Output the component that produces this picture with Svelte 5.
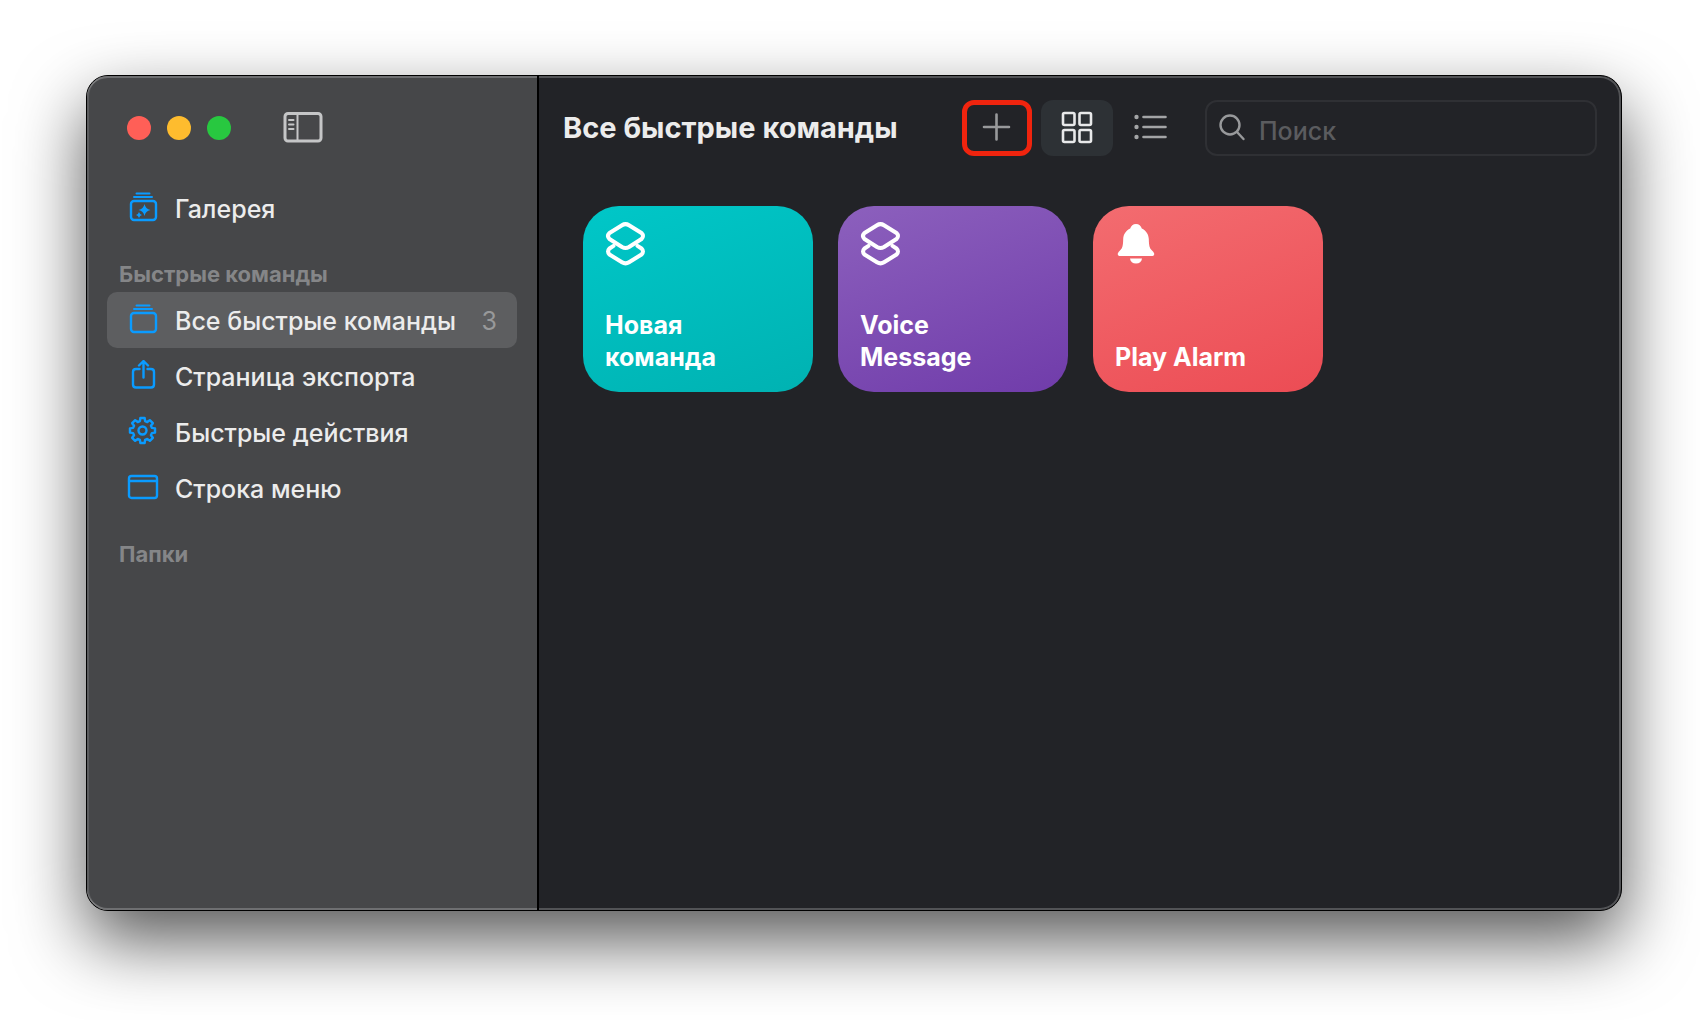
<script lang="ts">
	type Icon = 'gallery' | 'stack' | 'share' | 'gear' | 'menubar';

	interface NavItem {
		icon: Icon;
		label: string;
		count?: number;
	}

	const items: NavItem[] = [
		{ icon: 'stack', label: 'Все быстрые команды', count: 3 },
		{ icon: 'share', label: 'Страница экспорта' },
		{ icon: 'gear', label: 'Быстрые действия' },
		{ icon: 'menubar', label: 'Строка меню' }
	];

	const shortcuts = [
		{ title: 'Новая команда', color: 'teal', icon: 'layers' },
		{ title: 'Voice Message', color: 'purple', icon: 'layers' },
		{ title: 'Play Alarm', color: 'red', icon: 'bell' }
	];

	let selected = $state('Все быстрые команды');
	let view = $state('grid');
	let query = $state('');

	// Eight-toothed outline, walked tooth by tooth round the centre
	function gearPath(cx: number, cy: number, outer: number, inner: number) {
		const points: string[] = [];
		for (let i = 0; i < 8; i++) {
			const a = (i * 45 - 90) * (Math.PI / 180);
			for (const [r, d] of [[inner, -0.27], [outer, -0.17], [outer, 0.17], [inner, 0.27]]) {
				points.push(`${(cx + r * Math.cos(a + d)).toFixed(2)} ${(cy + r * Math.sin(a + d)).toFixed(2)}`);
			}
		}
		return `M${points.join('L')}Z`;
	}
</script>

{#snippet navIcon(name: Icon)}
	<svg class="nav-icon" viewBox="0 0 32 32" aria-hidden="true">
		{#if name === 'gallery' || name === 'stack'}
			<path class="thin" d="M9.500 1.500H22.500" />
			<path class="thin" d="M7 5H25" />
			<rect x="4" y="9" width="25" height="19" rx="3" />
			{#if name === 'gallery'}
				<path class="solid" d="M17.500 12Q18.500 17 23.500 18Q18.500 19 17.500 24Q16.500 19 11.500 18Q16.500 17 17.500 12Z" />
				<path class="solid" d="M12 20Q12.700 22.300 15 23Q12.700 23.700 12 26Q11.300 23.700 9 23Q11.300 22.300 12 20Z" />
			{/if}
		{:else if name === 'share'}
			<path d="M12.500 9H9Q6 9 6 12V24.500Q6 27.500 9 27.500H24Q27 27.500 27 24.500V12Q27 9 24 9H20.500" />
			<path d="M16.500 17.500V1M12 5.500L16.500 1L21 5.500" />
		{:else if name === 'gear'}
			<path d={gearPath(15.5, 14.5, 12.7, 9.7)} />
			<circle cx="15.500" cy="14.500" r="4" />
		{:else}
			<rect x="2" y="4" width="28" height="22" rx="2.500" />
			<path d="M2 9H30" />
		{/if}
	</svg>
{/snippet}

<main class="window">
	<aside class="sidebar">
		<div class="titlebar">
			<button class="light close" aria-label="Закрыть"></button>
			<button class="light minimize" aria-label="Свернуть"></button>
			<button class="light zoom" aria-label="Развернуть"></button>
			<button class="toggle" aria-label="Боковое меню">
				<svg viewBox="0 0 40 32" aria-hidden="true">
					<rect x="2" y="1.500" width="36" height="27.500" rx="3" />
					<path class="thin" d="M14.500 2V29" />
					<path class="thin" d="M6 8H10.500M6 12.500H10.500M6 17H10.500" />
				</svg>
			</button>
		</div>

		<nav>
			<button class="nav-item" class:selected={selected === 'Галерея'} onclick={() => (selected = 'Галерея')}>
				{@render navIcon('gallery')}
				<span class="nav-label">Галерея</span>
			</button>

			<h2 class="section">Быстрые команды</h2>
			{#each items as item}
				<button class="nav-item" class:selected={selected === item.label} onclick={() => (selected = item.label)}>
					{@render navIcon(item.icon)}
					<span class="nav-label">{item.label}</span>
					{#if item.count}
						<span class="count">{item.count}</span>
					{/if}
				</button>
			{/each}

			<h2 class="section">Папки</h2>
		</nav>
	</aside>

	<section class="content">
		<header class="toolbar">
			<h1>Все быстрые команды</h1>
			<button class="tool add" aria-label="Новая команда">
				<svg viewBox="0 0 36 36" aria-hidden="true"><path d="M17.500 4.500V29.500M5 17H30" /></svg>
			</button>
			<button class="tool" class:active={view === 'grid'} aria-label="Сетка" onclick={() => (view = 'grid')}>
				<svg viewBox="0 0 36 36" aria-hidden="true">
					<rect x="4" y="3" width="11.500" height="12" rx="1.500" />
					<rect x="20.500" y="3" width="11.500" height="12" rx="1.500" />
					<rect x="4" y="20" width="11.500" height="12" rx="1.500" />
					<rect x="20.500" y="20" width="11.500" height="12" rx="1.500" />
				</svg>
			</button>
			<button class="tool" class:active={view === 'list'} aria-label="Список" onclick={() => (view = 'list')}>
				<svg viewBox="0 0 36 36" aria-hidden="true">
					<path d="M12.500 7H34.500M12.500 17H34.500M12.500 27H34.500" />
					<circle class="dot" cx="5.500" cy="7" r="2.200" />
					<circle class="dot" cx="5.500" cy="17" r="2.200" />
					<circle class="dot" cx="5.500" cy="27" r="2.200" />
				</svg>
			</button>
			<label class="search">
				<svg viewBox="0 0 28 28" aria-hidden="true">
					<circle cx="11" cy="11" r="9.500" />
					<path d="M18 18L24.500 25" />
				</svg>
				<input type="text" placeholder="Поиск" aria-label="Поиск" bind:value={query} />
			</label>
		</header>

		<div class="cards">
			{#each shortcuts as shortcut}
				<button class="card {shortcut.color}">
					{#if shortcut.icon === 'layers'}
						<svg viewBox="-1 0 44 44" aria-hidden="true">
							<path class="stroke" d="M16 3.200Q19.500 1 23 3.200L35.500 11Q38.500 14 35.500 17L23 25Q19.500 27 16 25L3.500 17Q0.500 14 3.500 11Z" />
							<path class="stroke" d="M7.500 23.800L3.500 26.500Q0.500 29.500 3.500 32.500L16 40.300Q19.500 42.500 23 40.300L35.500 32.500Q38.500 29.500 35.500 26.500L31.500 23.800" />
						</svg>
					{:else}
						<svg viewBox="0 0 44 44" aria-hidden="true">
							<path d="M21 2C24 2 26 3.800 26.800 6.500C31 8.500 33.500 12 33.800 17C34 24 34.500 26 37 28.500C39 30.500 39.500 31.500 39.200 32.500C38.900 33.500 38 34 36.500 34H5.500C4 34 3.100 33.500 2.800 32.500C2.500 31.500 3 30.500 5 28.500C7.500 26 8 24 8.200 17C8.500 12 11 8.500 15.200 6.500C16 3.800 18 2 21 2Z" />
							<path d="M15 36.500H27C26.500 40 24.500 41.500 21 41.500C17.500 41.500 15.500 40 15 36.500Z" />
						</svg>
					{/if}
					<span>{shortcut.title}</span>
				</button>
			{/each}
		</div>
	</section>
</main>

<style>
	:global(body) {
		background: #fff;
	}

	.window {
		display: flex;
		box-sizing: border-box;
		min-height: calc(100vh - 184px);
		margin: 75px 78px 109px 86px;
		border: 1px solid #000;
		border-radius: 22px;
		background: #222327;
		box-shadow:
			inset 0 0 0 2px rgba(255, 255, 255, 0.22),
			0 30px 70px rgba(0, 0, 0, 0.66);
		font-family: Inter, 'Noto Sans', sans-serif;
		color: #ececec;
	}

	button {
		padding: 0;
		border: 0;
		background: none;
		color: inherit;
		font: inherit;
	}

	svg {
		display: block;
		fill: none;
		stroke: currentColor;
		stroke-linecap: round;
		stroke-linejoin: round;
	}

	.sidebar {
		box-sizing: border-box;
		width: 452px;
		flex-shrink: 0;
		padding: 24px 20px;
		border-right: 2px solid #000;
		border-radius: 21px 0 0 21px;
		background: #464749;
		box-shadow:
			inset 0 2px rgba(255, 255, 255, 0.22),
			inset 2px 0 rgba(255, 255, 255, 0.12),
			inset 0 -2px rgba(255, 255, 255, 0.22);
	}

	.titlebar {
		display: flex;
		align-items: center;
		gap: 16px;
		height: 56px;
		padding-left: 20px;
	}

	.light {
		width: 24px;
		height: 24px;
		border-radius: 50%;
	}

	.close {
		background: #ff5f57;
	}

	.minimize {
		background: #febc2e;
	}

	.zoom {
		background: #28c840;
	}

	.toggle {
		margin-left: 36px;
		color: #c5c6c7;
	}

	.toggle svg {
		width: 40px;
		height: 32px;
		stroke-width: 3;
	}

	.toggle .thin {
		stroke-width: 2;
	}

	nav {
		padding-top: 24px;
	}

	.nav-item {
		display: flex;
		align-items: center;
		width: 100%;
		height: 56px;
		padding: 0 20px;
		gap: 16px;
		border-radius: 10px;
		text-align: left;
		font-size: 25px;
		font-weight: 500;
	}

	.nav-item.selected {
		background: #5d5e60;
	}

	.nav-icon {
		width: 32px;
		height: 32px;
		flex-shrink: 0;
		color: #0a9bff;
		stroke-width: 2.4;
	}

	.nav-icon .thin {
		stroke-width: 2;
	}

	.nav-icon .solid {
		fill: currentColor;
		stroke: none;
	}

	.nav-label,
	.count {
		padding-top: 2px;
	}

	.nav-label {
		flex: 1;
		white-space: nowrap;
	}

	.count {
		color: #98999a;
		font-weight: 400;
	}

	.section {
		margin: 22px 0 2px;
		padding: 0 12px;
		color: #858688;
		font-size: 22px;
		font-weight: 700;
		line-height: 32px;
	}

	.content {
		flex: 1;
		min-width: 0;
	}

	.toolbar {
		display: flex;
		align-items: center;
		height: 56px;
		padding: 24px 24px 0 24px;
	}

	h1 {
		flex: 1;
		margin: 0;
		font-size: 29px;
		font-weight: 700;
		line-height: 40px;
		white-space: nowrap;
	}

	.tool {
		box-sizing: border-box;
		display: flex;
		align-items: center;
		justify-content: center;
		width: 72px;
		height: 56px;
		border-radius: 12px;
		color: #a3a4a6;
	}

	.tool svg {
		width: 36px;
		height: 36px;
		stroke-width: 2.6;
	}

	.tool.active {
		background: #2d3135;
		color: #e8e9ea;
	}

	.tool.add {
		width: 70px;
		margin-right: 9px;
		border: 5px solid #f0240e;
		color: #98999b;
	}

	.tool .dot {
		fill: currentColor;
		stroke: none;
	}

	.search {
		box-sizing: border-box;
		display: flex;
		align-items: center;
		gap: 12px;
		width: 392px;
		height: 56px;
		margin-left: 20px;
		padding: 0 12px;
		border: 2px solid #2f3034;
		border-radius: 12px;
	}

	.search svg {
		width: 28px;
		height: 28px;
		flex-shrink: 0;
		color: #98999b;
		stroke-width: 2.4;
	}

	.search input {
		flex: 1;
		min-width: 0;
		padding: 6px 0 0;
		border: 0;
		outline: 0;
		background: none;
		color: #ececec;
		font: inherit;
		font-size: 25px;
		font-weight: 500;
	}

	.search input::placeholder {
		color: #5b5c5f;
		opacity: 1;
	}

	.cards {
		display: flex;
		flex-wrap: wrap;
		gap: 25px;
		padding: 50px 44px;
	}

	.card {
		box-sizing: border-box;
		display: flex;
		flex-direction: column;
		align-items: flex-start;
		justify-content: space-between;
		width: 230px;
		height: 186px;
		padding: 16px 64px 19px 22px;
		border-radius: 36px;
		color: #fff;
		font-size: 25px;
		font-weight: 700;
		line-height: 32px;
		text-align: left;
	}

	.card svg {
		width: 44px;
		height: 44px;
		fill: #fff;
		stroke: none;
	}

	.card .stroke {
		fill: none;
		stroke: #fff;
		stroke-width: 4;
	}

	.teal {
		background: linear-gradient(160deg, #00c7c8, #00b2b2);
	}

	.purple {
		background: linear-gradient(160deg, #8c60bd, #703caa);
	}

	.red {
		background: linear-gradient(160deg, #f36c70, #ec4c54);
	}

	.red span {
		white-space: nowrap;
	}
</style>
